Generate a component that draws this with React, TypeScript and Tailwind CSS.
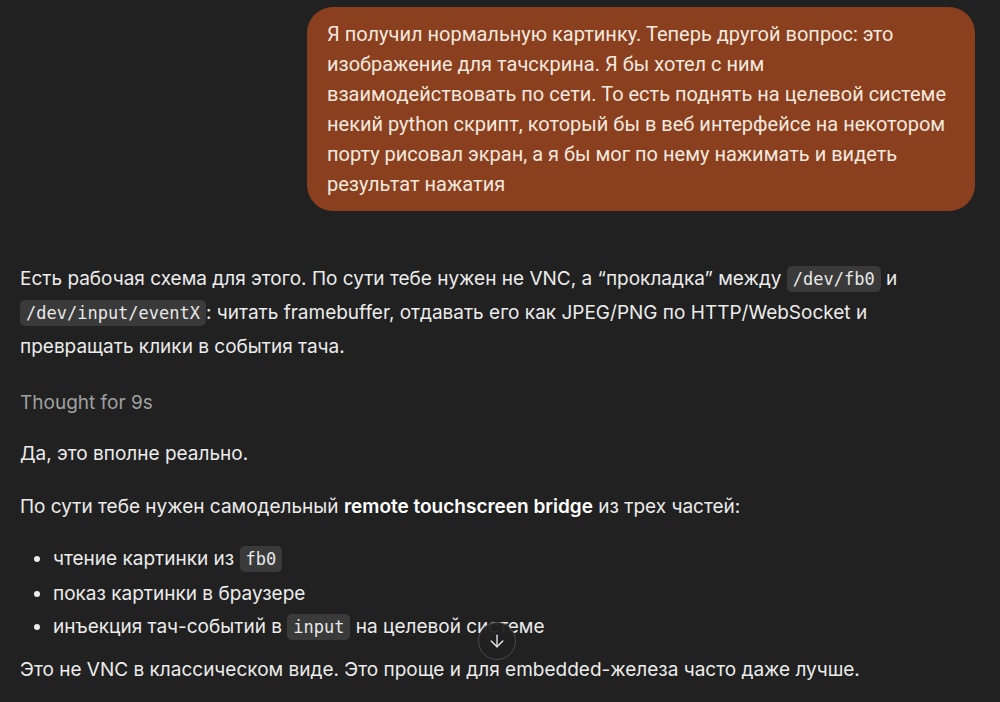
import { ArrowDown } from 'lucide-react';

function Code({ children }: { children: React.ReactNode }) {
  return (
    <code className="rounded-[5px] bg-[#3a3a3a] px-[6px] py-[3px] font-['DejaVu_Sans_Mono',monospace] text-[17px] text-[#e8e8e8]">
      {children}
    </code>
  );
}

export default function App() {
  return (
    <div className="relative min-h-screen overflow-hidden bg-[#212121] pl-5 pr-[25px] pt-[7px] font-['Inter','Noto_Sans',sans-serif]">
      {/* User message */}
      <div className="ml-auto w-[668px] rounded-[26px] bg-[#8a3f1f] px-5 pt-[12px] pb-[12px] font-['Roboto',sans-serif] text-[20px] leading-[30px] text-[#f5e9df]">
        Я получил нормальную картинку. Теперь другой вопрос: это
        <br />
        изображение для тачскрина. Я бы хотел с ним
        <br />
        взаимодействовать по сети. То есть поднять на целевой системе
        <br />
        некий python скрипт, который бы в веб интерфейсе на некотором
        <br />
        порту рисовал экран, а я бы мог по нему нажимать и видеть
        <br />
        результат нажатия
      </div>

      {/* Assistant reply */}
      <div className="mt-[51px] text-[19px] leading-[34px] text-[#ececec]">
        <p>
          Есть рабочая схема для этого. По сути тебе нужен не VNC, а “прокладка” между <Code>/dev/fb0</Code> и
          <br />
          <Code>/dev/input/eventX</Code>: читать framebuffer, отдавать его как JPEG/PNG по HTTP/WebSocket и
          <br />
          превращать клики в события тача.
        </p>

        <p className="mt-[22px] text-[#a0a0a0]">Thought for 9s</p>

        <p className="mt-[17px]">Да, это вполне реально.</p>

        <p className="mt-[19px]">
          По сути тебе нужен самодельный <strong className="font-semibold text-white">remote touchscreen bridge</strong> из трех частей:
        </p>

        <ul className="mt-[18px] list-disc pl-[33px] leading-[33.5px] marker:text-[#ececec]">
          <li>
            чтение картинки из <Code>fb0</Code>
          </li>
          <li>показ картинки в браузере</li>
          <li>
            инъекция тач-событий в <Code>input</Code> на целевой системе
          </li>
        </ul>

        <p className="mt-[8px]">Это не VNC в классическом виде. Это проще и для embedded-железа часто даже лучше.</p>
      </div>

      {/* Scroll to bottom */}
      <button className="absolute left-[478px] top-[622px] flex h-[38px] w-[38px] items-center justify-center rounded-full border border-[#4a4a4a] bg-[#212121]/95 text-[#ececec]">
        <ArrowDown size={20} strokeWidth={1.6} />
      </button>
    </div>
  );
}
